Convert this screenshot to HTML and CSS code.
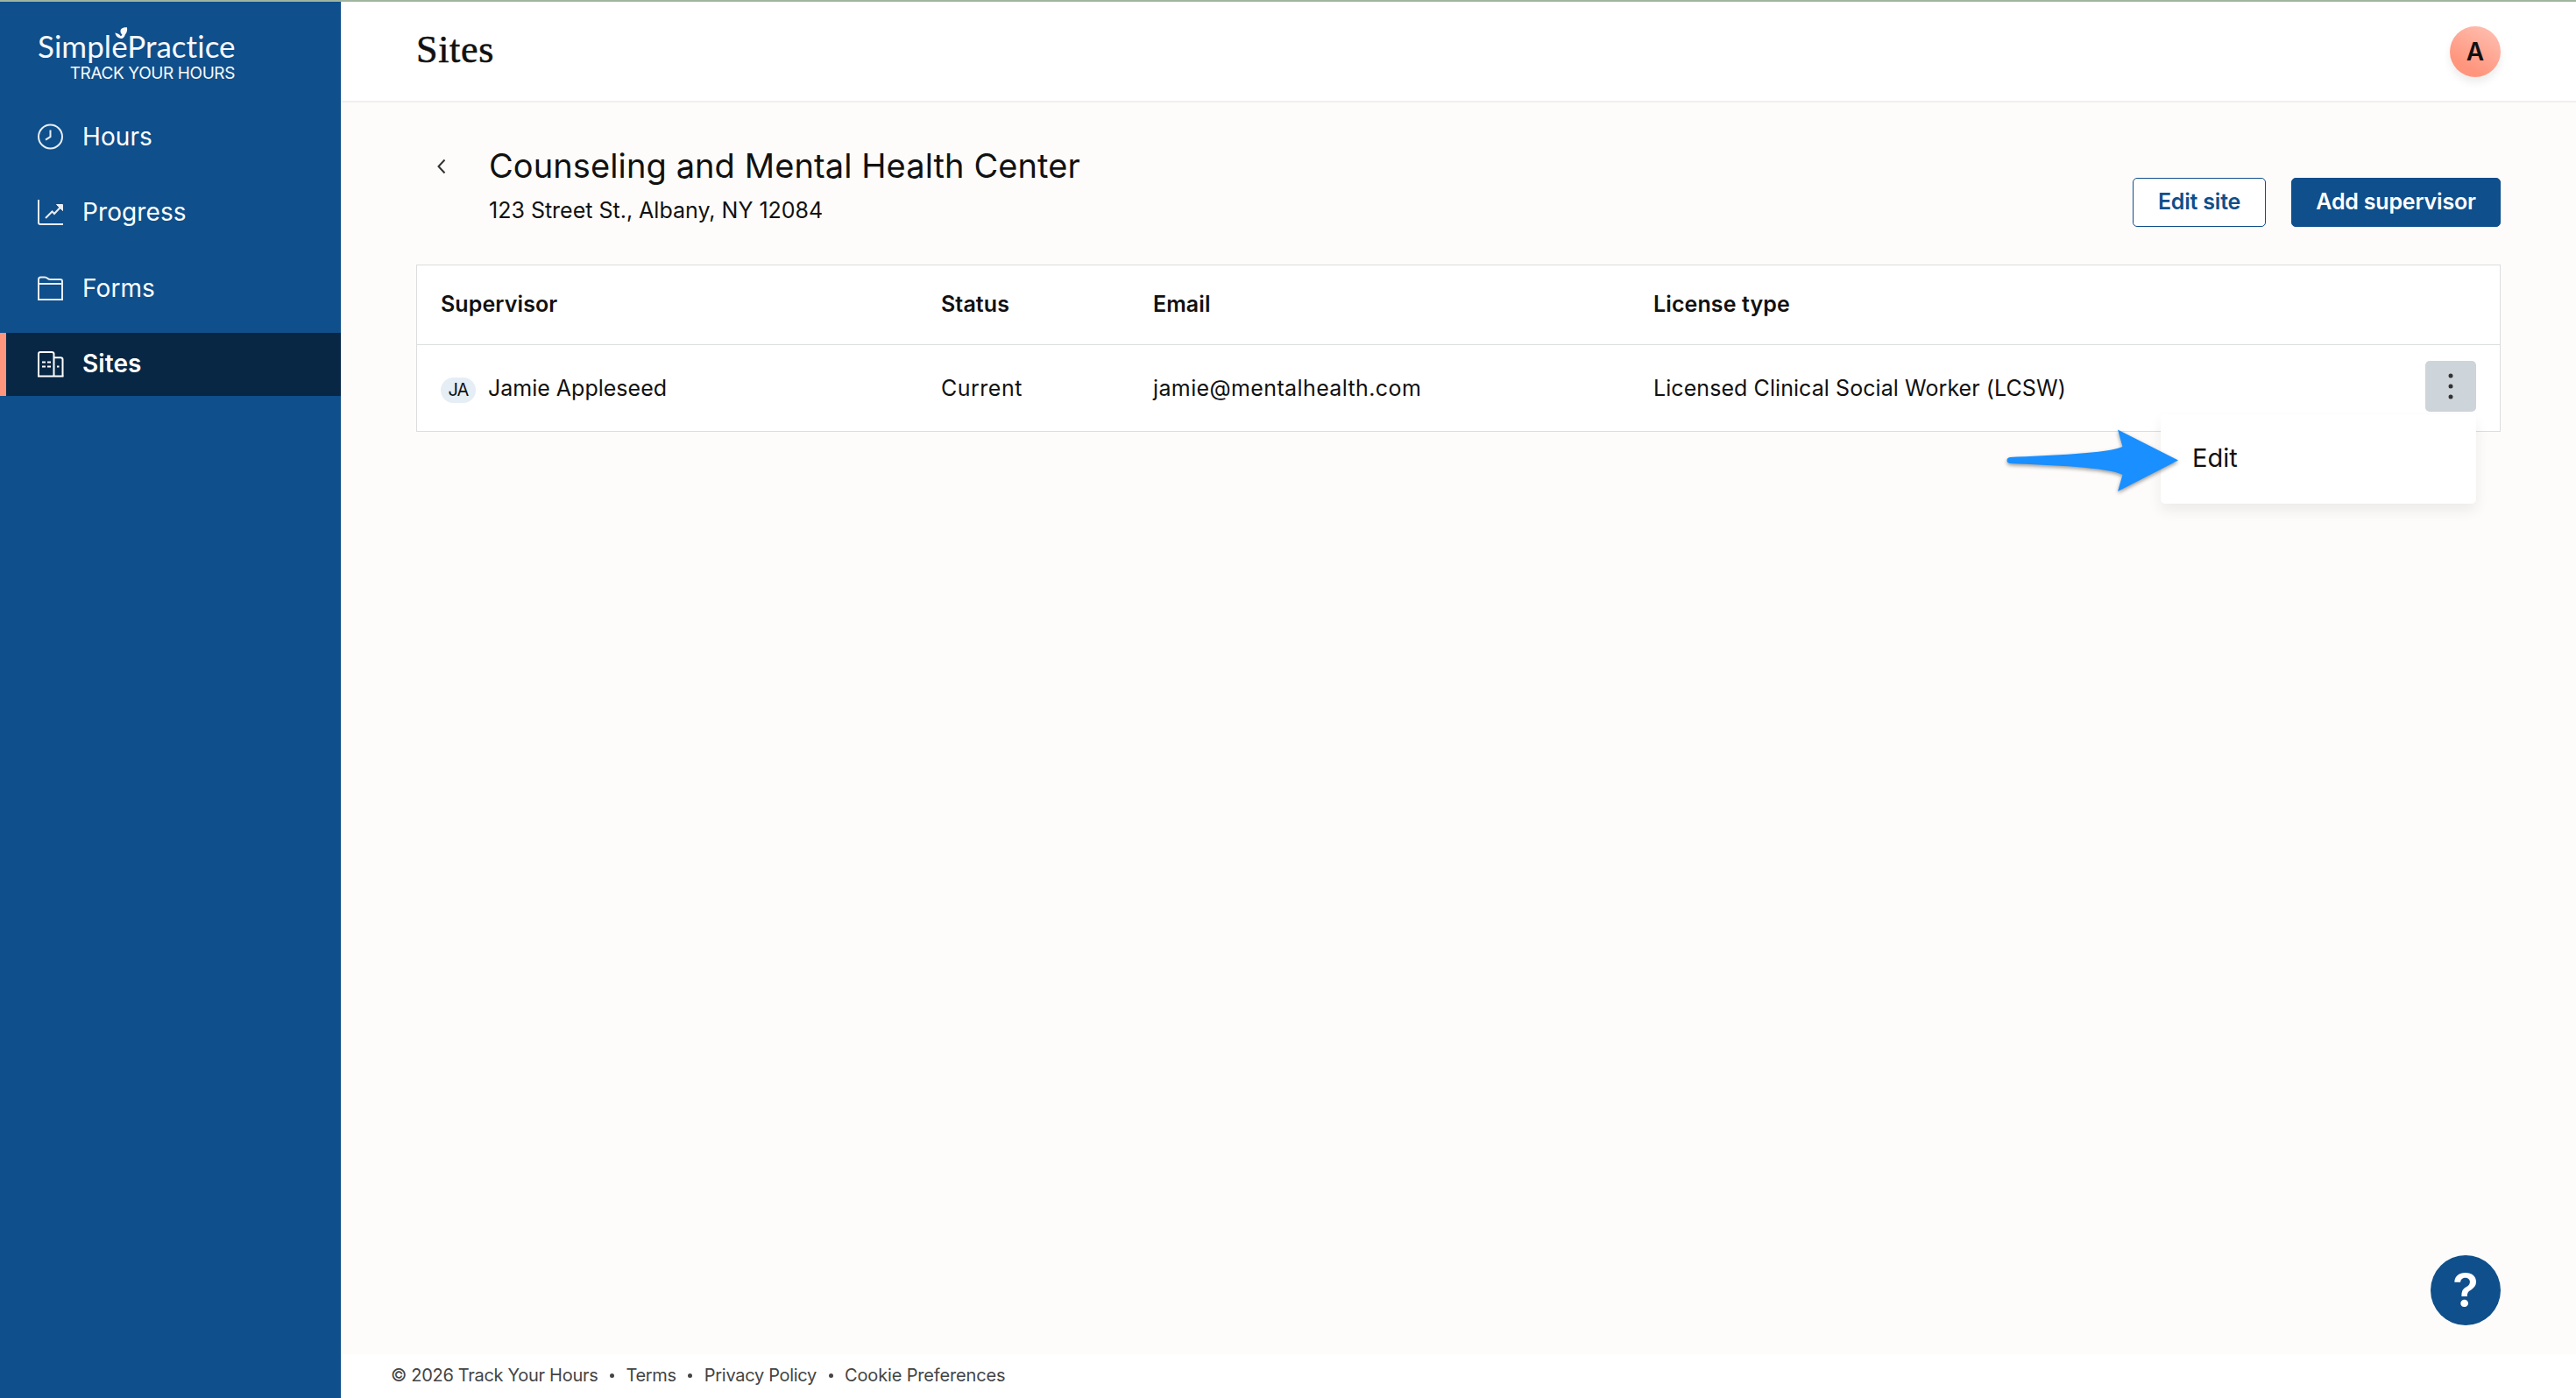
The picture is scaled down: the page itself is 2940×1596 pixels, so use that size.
FILE: index.html
```html
<!DOCTYPE html>
<html lang="en">
<head>
    <meta charset="UTF-8">
    <meta name="viewport" content="width=device-width, initial-scale=1.0">
    <title>Sites - Track Your Hours</title>
    <link rel="stylesheet" href="styles.css">
</head>
<body>

<div class="sidebar">
    <div class="brand">
        <div class="brand-name">SimplePractice</div>
        <div class="brand-sub">TRACK YOUR HOURS</div>
        <svg class="brand-leaf" width="16" height="14" viewBox="0 0 16 14" fill="#f7f8fa">
            <path d="M6.5 4.5C6.5 1.8 8.800 0 14 .2C14.500 3.500 13.800 6.500 12 8.200C11 11.500 9.500 13.200 7 13C3.500 12.500 1 10 .3 6.500C3 6.800 5.500 8.200 6.800 10.200C8 9.500 8.400 9 8.300 8.300C7 7.500 6.500 6 6.500 4.500Z"/>
        </svg>
    </div>

    <nav class="nav">
        <a class="nav-item">
            <svg width="30" height="30" viewBox="0 0 30 30" fill="none" stroke="#e7edf4" stroke-width="2">
                <circle cx="14.5" cy="15" r="13.5"/>
                <path d="M14.500 7.500V15.200L9 18.700"/>
            </svg>
            <span>Hours</span>
        </a>
        <a class="nav-item">
            <svg width="30" height="30" viewBox="0 0 30 30" fill="none" stroke="#e7edf4" stroke-width="2">
                <path d="M1 0V26Q1 28 3 28H29"/>
                <path d="M9 21L16.500 13.500L19 16L26 8.500"/>
                <path d="M21.500 5.500H28.500V12.500Z" fill="#e7edf4" stroke-width="1"/>
            </svg>
            <span>Progress</span>
        </a>
        <a class="nav-item">
            <svg width="30" height="30" viewBox="0 0 30 30" fill="none" stroke="#e7edf4" stroke-width="2">
                <path d="M1 28V5Q1 2.500 3.500 2.500H8Q10 2.500 11.500 4Q12.500 5 14.500 5H26Q28 5 28 7V28Z"/>
                <path d="M1 10H28"/>
            </svg>
            <span>Forms</span>
        </a>
        <a class="nav-item active">
            <svg width="30" height="30" viewBox="0 0 30 30" fill="none" stroke="#fff" stroke-width="2">
                <path d="M1 28.500V3Q1 1 3 1H16Q18.500 1 18.500 3V28.500"/>
                <path d="M18.500 7.200H26Q28.500 7.200 28.500 9.500V28.500"/>
                <path d="M0 28.500H29.500"/>
                <path d="M5 12.500H9M11 12.500H15M5 17.500H9M11 17.500H15M22 17.500H24.500"/>
            </svg>
            <span>Sites</span>
        </a>
    </nav>
</div>

<div class="main">
    <div class="header">
        <div class="header-title">Sites</div>
        <div class="avatar">A</div>
    </div>

    <div class="content">
        <div class="site-head">
            <svg class="back" width="12" height="18" viewBox="0 0 12 18" fill="none" stroke="#333" stroke-width="2">
                <path d="M9.500 1.500L2.500 9L9.500 16.500"/>
            </svg>
            <div class="site-info">
                <h1>Counseling and Mental Health Center</h1>
                <p>123 Street St., Albany, NY 12084</p>
            </div>
            <button class="btn">Edit site</button>
            <button class="btn btn-primary">Add supervisor</button>
        </div>

        <div class="table">
            <div class="row row-head">
                <div>Supervisor</div>
                <div>Status</div>
                <div>Email</div>
                <div>License type</div>
            </div>
            <div class="row">
                <div class="person"><span class="initials">JA</span>Jamie Appleseed</div>
                <div class="status">Current</div>
                <div class="email">jamie@mentalhealth.com</div>
                <div class="license">Licensed Clinical Social Worker (LCSW)</div>
                <div class="menu">
                    <button class="menu-btn">
                        <svg width="6" height="30" viewBox="0 0 6 30" fill="#333">
                            <circle cx="3" cy="3" r="2.500"/>
                            <circle cx="3" cy="15" r="2.500"/>
                            <circle cx="3" cy="27" r="2.500"/>
                        </svg>
                    </button>
                    <div class="dropdown">Edit</div>
                    <svg class="arrow" width="204" height="84" viewBox="0 0 204 84" fill="#1a8fff">
                        <path d="M5 35C50 33 118 30.500 133.500 23L128 3.500L197 38.500L128 74L133.500 55C118 46.500 50 44 5 42Q1.500 41.500 1.500 38.500Q1.500 35.500 5 35Z"/>
                    </svg>
                </div>
            </div>
        </div>
    </div>

    <div class="footer">
        <span class="copy">© 2026 Track Your Hours</span>
        <i></i>
        <a>Terms</a>
        <i></i>
        <a>Privacy Policy</a>
        <i></i>
        <a class="cookies">Cookie Preferences</a>
    </div>
</div>

<button class="help">?</button>

</body>
</html>
```
FILE: styles.css
```css
* {
    box-sizing: border-box;
}
body {
    display: flex;
    height: 1596px;
    margin: 0;
    border-top: 2px solid #a0b5a0;
    background-color: #fdfcfa;
    color: #111;
    font-family: Inter, "Liberation Sans", sans-serif;
    font-size: 25px;
    overflow: hidden;
}
button {
    font-family: inherit;
    padding: 0;
    border: none;
    cursor: pointer;
}

/* Sidebar */
.sidebar {
    width: 389px;
    flex: none;
    padding-top: 30px;
    background-color: #0f4f8b;
    color: #fff;
}
.brand {
    position: relative;
    width: 225px;
    margin-left: 43px;
    color: #f7f8fa;
    white-space: nowrap;
}
.brand-name {
    font-family: Lato, sans-serif;
    font-size: 35px;
    line-height: 40px;
    letter-spacing: 0.05px;
}
.brand-sub {
    padding-top: 1px;
    font-size: 19px;
    line-height: 22px;
    letter-spacing: -0.4px;
    text-align: right;
}
.brand-leaf {
    position: absolute;
    left: 88px;
    top: -1px;
}
.nav {
    display: flex;
    flex-direction: column;
    gap: 14.5px;
    margin-top: 25px;
}
.nav-item {
    display: flex;
    align-items: center;
    gap: 21px;
    height: 72px;
    padding-left: 36px;
    border-left: 7px solid transparent;
    font-size: 28px;
    letter-spacing: 0.1px;
}
.nav-item span {
    padding-bottom: 1px;
}
.nav-item.active {
    background-color: #072745;
    border-left-color: #ff957d;
    font-weight: 600;
}

/* Header */
.main {
    display: flex;
    flex-direction: column;
    flex: 1;
}
.header {
    display: flex;
    align-items: center;
    justify-content: space-between;
    height: 115px;
    padding: 0 86px;
    background-color: #fff;
    border-bottom: 2px solid #f0f0f0;
}
.header-title {
    margin-bottom: 5px;
    font-family: "Liberation Serif", serif;
    font-size: 44px;
    letter-spacing: 0.7px;
    -webkit-text-stroke: 0.6px #111;
}
.avatar {
    width: 58px;
    height: 58px;
    margin-top: 1px;
    border-radius: 50%;
    background: linear-gradient(210deg, #ffc0b2 5%, #ff957d 75%);
    box-shadow: 0 6px 10px rgba(0, 0, 0, 0.08);
    font-size: 28px;
    font-weight: 600;
    line-height: 58px;
    text-align: center;
}

/* Site */
.content {
    flex: 1;
    padding: 49px 86px 0;
}
.site-head {
    display: flex;
    align-items: flex-end;
    height: 93px;
    margin-bottom: 43px;
}
.back {
    align-self: flex-start;
    margin: 15px 48px 0 23px;
}
.site-info {
    flex: 1;
    align-self: flex-start;
}
.site-info h1 {
    margin: 0 0 11px;
    font-size: 38px;
    font-weight: 400;
    line-height: 46px;
    letter-spacing: 0.1px;
}
.site-info p {
    margin: 0;
    line-height: 34px;
}
.btn {
    width: 152px;
    height: 56px;
    margin-left: 29px;
    padding-bottom: 2px;
    border: 1px solid #0f4f8b;
    border-radius: 5px;
    background-color: #fff;
    color: #0f4f8b;
    font-size: 25px;
    font-weight: 600;
    letter-spacing: -0.2px;
}
.btn-primary {
    width: 239px;
    background-color: #0f4f8b;
    color: #fff;
}

/* Table */
.table {
    border: 1px solid #dcdddd;
    background-color: #fff;
}
.row {
    display: grid;
    grid-template-columns: 571px 242px 571px 1fr 58px;
    align-items: center;
    height: 98px;
    padding: 0 27px;
}
.row-head {
    height: 91px;
    padding-bottom: 2px;
    border-bottom: 1px solid #dcdddd;
    font-weight: 600;
    letter-spacing: 0.1px;
}
.person {
    display: flex;
    align-items: center;
}
.initials {
    width: 40px;
    height: 29px;
    margin: 4px 14px 0 0;
    border-radius: 15px;
    background-color: #e5edf5;
    font-size: 20px;
    line-height: 28px;
    text-align: center;
    letter-spacing: -1px;
}
.status {
    letter-spacing: 0.5px;
}
.email {
    letter-spacing: 0.38px;
}
.license {
    letter-spacing: 0.07px;
}
.menu {
    position: relative;
    height: 58px;
    margin-bottom: 4px;
}
.menu-btn {
    display: flex;
    align-items: center;
    justify-content: center;
    width: 58px;
    height: 58px;
    border-radius: 5px;
    background-color: #cdd4da;
}
.dropdown {
    position: absolute;
    top: 61px;
    right: 0;
    width: 360px;
    height: 102px;
    padding-left: 36px;
    border-radius: 5px;
    background-color: #fff;
    box-shadow: 0 8px 16px rgba(0, 0, 0, 0.07);
    font-size: 29px;
    line-height: 100px;
}
.arrow {
    position: absolute;
    top: 75px;
    right: 333px;
    overflow: visible;
    filter: drop-shadow(0 2px 2px rgba(0, 0, 0, 0.4));
}

/* Footer */
.footer {
    display: flex;
    align-items: center;
    height: 50px;
    padding: 0 0 3px 57px;
    background-color: #fff;
    color: #444;
    font-size: 20px;
    letter-spacing: -0.3px;
}
.footer i {
    width: 5px;
    height: 5px;
    margin: 2px 13.5px 0;
    border-radius: 50%;
    background-color: #444;
}
.footer .cookies {
    letter-spacing: -0.15px;
}
.help {
    position: fixed;
    right: 86px;
    bottom: 83px;
    width: 80px;
    height: 80px;
    border-radius: 50%;
    background-color: #0f4f8b;
    color: #fff;
    font-size: 54px;
    font-weight: 600;
    line-height: 78px;
}
```
